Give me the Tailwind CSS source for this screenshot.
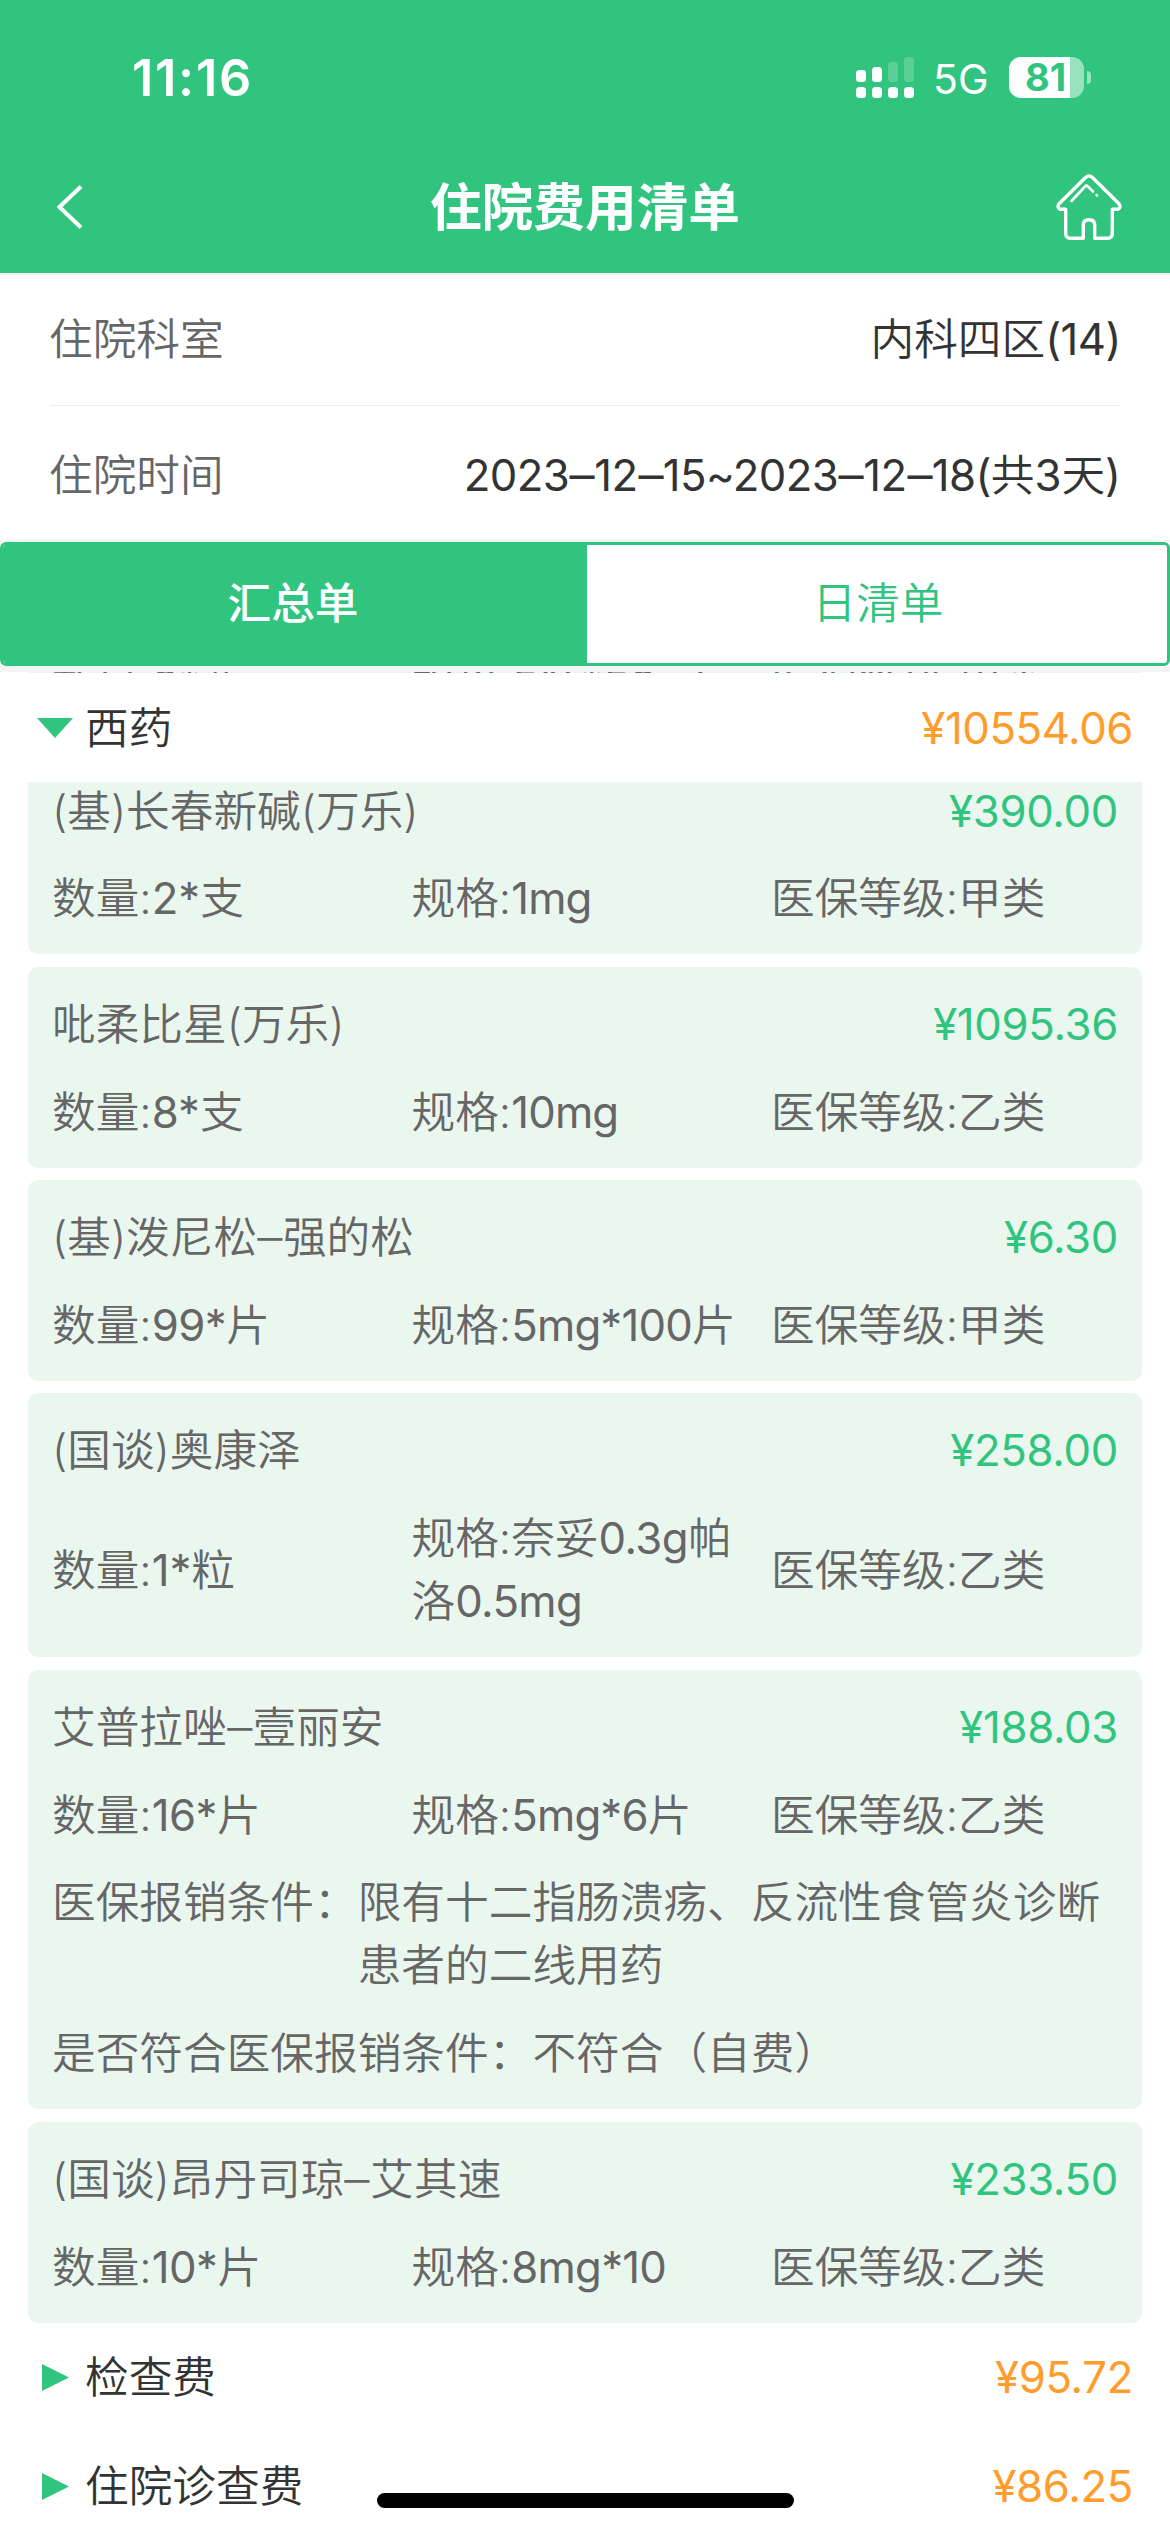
<!DOCTYPE html>
<html lang="zh-CN">
<head>
<meta charset="utf-8">
<title>住院费用清单</title>
<script src="https://cdn.jsdelivr.net/npm/@tailwindcss/browser@4"></script>
</head>
<body class="relative flex h-[2532px] w-[1170px] flex-col overflow-hidden bg-white font-[Inter,'Noto_Sans_CJK_SC',sans-serif] text-[43.68px] leading-[62.9px] font-[350] text-[#666]">

<header class="flex h-[273px] shrink-0 flex-col bg-[#31c47e] text-white">
  <div class="flex h-[140px] items-start justify-between pt-[57px] pr-[79px] pl-[132px]">
    <div class="text-[50.5px] leading-[42px] font-semibold tracking-[1.7px]">11:16</div>
    <div class="flex h-[41px] items-center">
      <svg class="h-[41px] w-[58px]" viewBox="0 0 58 41" fill="#fff">
        <rect x="0" y="13" width="10" height="12" rx="3.5"/><rect x="16" y="10" width="10" height="15" rx="3.5"/>
        <rect x="32" y="5" width="10" height="20" rx="3" opacity=".2"/><rect x="48" y="0" width="10" height="25" rx="3" opacity=".2"/>
        <rect x="0" y="30" width="10" height="11" rx="3.5"/><rect x="16" y="30" width="10" height="11" rx="3.5"/>
        <rect x="32" y="30" width="10" height="11" rx="3.5"/><rect x="48" y="30" width="10" height="11" rx="3.5"/>
      </svg>
      <div class="ml-[19px] w-[76px] pt-[3px] text-[41px] leading-[41px] font-normal">5G</div>
      <div class="flex h-[41px] w-[75px] items-center justify-center rounded-[12px] bg-linear-to-r from-white from-81% to-white/50 to-81% pr-[2px] text-[38px] leading-[41px] font-bold text-[#31c47e]">81</div>
      <div class="ml-[3px] h-[13px] w-[4px] rounded-r-full bg-white/50"></div>
    </div>
  </div>
  <div class="flex h-[133px] items-center justify-between pr-[48px] pl-[57px]">
    <svg class="h-[44px] w-[65px]" viewBox="0 0 65 44" fill="none" stroke="#fff" stroke-width="4"><path d="M24 1.5 2.500 22 24 42.500"/></svg>
    <h1 class="-ml-[8px] text-[51.7px] leading-[60px] font-bold">住院费用清单</h1>
    <svg class="h-[66px] w-[66px]" viewBox="0 0 66 66" fill="none" stroke="#fff" stroke-width="3.400" stroke-linecap="round" stroke-linejoin="round">
      <path d="M27.300 64.300H14.500Q9.700 64.300 9.700 59.500V35.200H4Q.8 33.500 2.800 30L29.500 3.500Q33 .5 36.500 3.500L63.200 30Q65.200 33.500 62 35.200H56.300V59.500Q56.300 64.300 51.500 64.300H38.700V51Q38.700 45.800 33 45.800T27.300 51Z" stroke-linecap="butt"/>
      <path d="M15.500 27 29 12.500Q30.500 11 32 12.500L37 17.500M40.600 21 41 21.500" stroke-width="2.600"/>
    </svg>
  </div>
</header>

<section class="flex h-[269px] shrink-0 flex-col border-y-2 border-[#f1f2f4] px-[50px]">
  <div class="flex h-[131px] items-center justify-between border-b border-[#ebecef]"><span class="-ml-px">住院科室</span><span class="-mr-px text-[#333]">内科四区<span class="font-normal tracking-[-0.5px]">(14)</span></span></div>
  <div class="flex h-[134px] items-center justify-between pt-[6px]"><span class="-ml-px">住院时间</span><span class="-mr-px text-[#333]"><span class="font-normal tracking-[-0.6px]">2023<span class="mx-[2px] inline-block scale-x-115">–</span>12<span class="mx-[2px] inline-block scale-x-115">–</span>15~2023<span class="mx-[2px] inline-block scale-x-115">–</span>12<span class="mx-[2px] inline-block scale-x-115">–</span>18(</span>共<span class="font-normal">3</span>天<span class="font-normal">)</span></span></div>
</section>

<nav class="flex h-[124px] shrink-0 overflow-hidden rounded-[6px] border-[3px] border-[#31c47e] text-center">
  <div class="flex w-[584px] items-center justify-center bg-[#31c47e] pr-[4px] font-medium text-white">汇总单</div>
  <div class="flex flex-1 items-center justify-center pl-[2px] text-[#31c47e]">日清单</div>
</nav>
<div class="h-[6px] shrink-0 bg-[#f4f4f4]"></div>

<div class="mx-[28px] h-px shrink-0 overflow-hidden bg-[#eaf7ef] px-[24px] font-normal">
  <div class="-mt-[17px] grid grid-cols-[359.5px_359.5px_1fr]"><span>数量:2*瓶</span><span>规格:5%*50ml</span><span>医保等级:甲类</span></div>
</div>

<main class="flex flex-1 flex-col">
  <div class="z-10 flex h-[109px] shrink-0 items-center bg-white pr-[37px] pl-[37px] text-[#333]">
    <svg class="mr-[12px] h-[20px] w-[36px]" viewBox="0 0 36 20" fill="#31c47e"><path d="M0 0H36L18 20Z"/></svg>
    <span class="flex-1 pt-[3px]">西药</span><span class="pt-[3px] font-normal tracking-[-0.4px] text-[#ff9c2b]">¥10554.06</span>
  </div>

  <div class="-mt-[28.500px] flex flex-col gap-[12.500px] px-[28px]">
    <article class="flex flex-col gap-[25px] rounded-[10px] bg-[#eaf7ef] px-[24px] pt-[27px] pb-[23px]">
      <div class="flex justify-between"><span>(基)长春新碱(万乐)</span><span class="font-normal tracking-[-0.3px] text-[#31c47e]">¥390.00</span></div>
      <div class="grid grid-cols-[359.5px_359.5px_1fr] items-center"><span>数量:<span class="font-normal">2*</span>支</span><span>规格:<span class="font-normal tracking-[-0.8px]">1mg</span></span><span>医保等级:甲类</span></div>
    </article>
    <article class="flex flex-col gap-[25px] rounded-[10px] bg-[#eaf7ef] px-[24px] pt-[27px] pb-[23px]">
      <div class="flex justify-between"><span>吡柔比星(万乐)</span><span class="font-normal tracking-[-0.3px] text-[#31c47e]">¥1095.36</span></div>
      <div class="grid grid-cols-[359.5px_359.5px_1fr] items-center"><span>数量:<span class="font-normal">8*</span>支</span><span>规格:<span class="font-normal tracking-[-0.8px]">10mg</span></span><span>医保等级:乙类</span></div>
    </article>
    <article class="flex flex-col gap-[25px] rounded-[10px] bg-[#eaf7ef] px-[24px] pt-[27px] pb-[23px]">
      <div class="flex justify-between"><span>(基)泼尼松<span class="mx-[2px] inline-block scale-x-115">–</span>强的松</span><span class="font-normal tracking-[-0.3px] text-[#31c47e]">¥6.30</span></div>
      <div class="grid grid-cols-[359.5px_359.5px_1fr] items-center"><span>数量:<span class="font-normal tracking-[-0.5px]">99*</span>片</span><span>规格:<span class="font-normal tracking-[-0.8px]">5mg*100</span>片</span><span>医保等级:甲类</span></div>
    </article>
    <article class="flex flex-col gap-[25px] rounded-[10px] bg-[#eaf7ef] px-[24px] pt-[27px] pb-[23px]">
      <div class="flex justify-between"><span>(国谈)奥康泽</span><span class="font-normal tracking-[-0.3px] text-[#31c47e]">¥258.00</span></div>
      <div class="grid grid-cols-[359.5px_359.5px_1fr] items-center"><span>数量:<span class="font-normal">1*</span>粒</span><span>规格:奈妥<span class="font-normal tracking-[-0.5px]">0.3g</span>帕<br>洛<span class="font-normal tracking-[-0.6px]">0.5mg</span></span><span>医保等级:乙类</span></div>
    </article>
    <article class="flex flex-col gap-[25px] rounded-[10px] bg-[#eaf7ef] px-[24px] pt-[27px] pb-[23px]">
      <div class="flex justify-between"><span>艾普拉唑<span class="mx-[2px] inline-block scale-x-115">–</span>壹丽安</span><span class="font-normal tracking-[-0.3px] text-[#31c47e]">¥188.03</span></div>
      <div class="grid grid-cols-[359.5px_359.5px_1fr] items-center"><span>数量:<span class="font-normal tracking-[-0.5px]">16*</span>片</span><span>规格:<span class="font-normal tracking-[-0.8px]">5mg*6</span>片</span><span>医保等级:乙类</span></div>
      <div class="flex whitespace-nowrap"><span>医保报销条件：</span><span>限有十二指肠溃疡、反流性食管炎诊断<br>患者的二线用药</span></div>
      <div>是否符合医保报销条件：不符合（自费）</div>
    </article>
    <article class="flex flex-col gap-[25px] rounded-[10px] bg-[#eaf7ef] px-[24px] pt-[27px] pb-[23px]">
      <div class="flex justify-between"><span>(国谈)昂丹司琼<span class="mx-[2px] inline-block scale-x-115">–</span>艾其速</span><span class="font-normal tracking-[-0.3px] text-[#31c47e]">¥233.50</span></div>
      <div class="grid grid-cols-[359.5px_359.5px_1fr] items-center"><span>数量:<span class="font-normal tracking-[-0.5px]">10*</span>片</span><span>规格:<span class="font-normal tracking-[-0.7px]">8mg*10</span></span><span>医保等级:乙类</span></div>
    </article>
  </div>

  <div class="flex h-[109px] shrink-0 items-center pr-[37px] pl-[42px] text-[#333]">
    <svg class="mr-[16px] h-[27px] w-[27px]" viewBox="0 0 27 27" fill="#31c47e"><path d="M0 0 27 13.500 0 27Z"/></svg>
    <span class="flex-1 pt-[3px]">检查费</span><span class="pt-[3px] font-normal tracking-[-0.3px] text-[#ff9c2b]">¥95.72</span>
  </div>
  <div class="flex h-[109px] shrink-0 items-center pr-[37px] pl-[42px] text-[#333]">
    <svg class="mr-[16px] h-[27px] w-[27px]" viewBox="0 0 27 27" fill="#31c47e"><path d="M0 0 27 13.500 0 27Z"/></svg>
    <span class="flex-1 pt-[3px]">住院诊查费</span><span class="pt-[3px] font-normal tracking-[-0.3px] text-[#ff9c2b]">¥86.25</span>
  </div>
</main>

<div class="absolute bottom-[24px] left-[377px] h-[15px] w-[417px] rounded-full bg-black"></div>
</body>
</html>
